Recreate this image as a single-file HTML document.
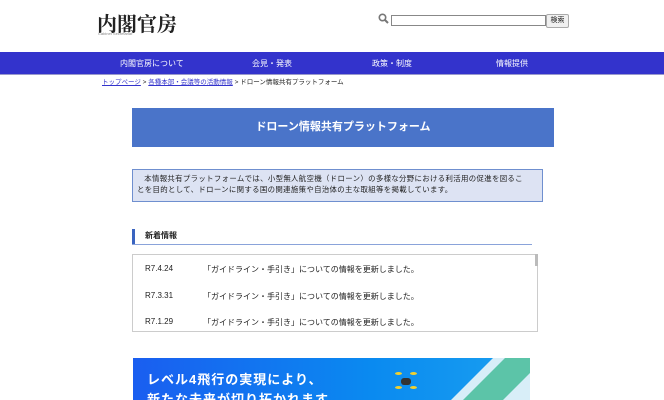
<!DOCTYPE html>
<html><head><meta charset="utf-8"><style>
body{margin:0;width:664px;height:400px;overflow:hidden;background:#fff;font-family:"Liberation Sans","Noto Sans CJK JP",sans-serif;color:#222;position:relative}
.a{position:absolute}
</style></head><body>
<div class="a" style="left:97px;top:8px;font-family:'Noto Serif CJK SC',serif;font-size:20px;font-weight:bold;letter-spacing:0px;color:#222">内閣官房</div>
<div class="a" style="left:98px;top:31px;font-size:4px;color:#888">Cabinet Secretariat</div>
<svg class="a" style="left:378px;top:13px" width="11" height="11"><circle cx="4.5" cy="4.5" r="3.2" fill="none" stroke="#777" stroke-width="1.6"/><line x1="7" y1="7" x2="10" y2="10" stroke="#777" stroke-width="2"/></svg>
<div class="a" style="left:391px;top:15px;width:153px;height:9px;border:1px solid #888"></div>
<div class="a" style="left:546px;top:14px;width:21px;height:12px;border:1px solid #aaa;background:#f0f0f0;font-size:7px;text-align:center;line-height:12px;border-radius:2px">検索</div>
<div class="a" style="left:0;top:52px;width:664px;height:22px;background:#3333cc;color:#fff;font-size:8px">
<span class="a" style="left:120px;top:6px">内閣官房について</span>
<span class="a" style="left:252px;top:6px">会見・発表</span>
<span class="a" style="left:372px;top:6px">政策・制度</span>
<span class="a" style="left:496px;top:6px">情報提供</span></div>
<div class="a" style="left:0;top:74px;width:664px;height:1px;background:#99c"></div>
<div class="a" style="left:102px;top:76px;font-size:6.5px;white-space:nowrap"><span style="color:#33c;text-decoration:underline">トップページ</span> &gt; <span style="color:#33c;text-decoration:underline">各種本部・会議等の活動情報</span> &gt; ドローン情報共有プラットフォーム</div>
<div class="a" style="left:132px;top:108px;width:422px;height:39px;background:#4a74c9;color:#fff;font-size:11px;font-weight:bold;text-align:center;line-height:39px">ドローン情報共有プラットフォーム</div>
<div class="a" style="left:132px;top:169px;width:411px;height:33px;padding:3px 4px 0;background:#dde3f3;border:1px solid #6f8fcf;font-size:7.4px;line-height:11px;box-sizing:border-box;white-space:nowrap;letter-spacing:0.35px">&nbsp;&nbsp;&nbsp;本情報共有プラットフォームでは、小型無人航空機（ドローン）の多様な分野における利活用の促進を図るこ<br>とを目的として、ドローンに関する国の関連施策や自治体の主な取組等を掲載しています。</div>
<div class="a" style="left:132px;top:229px;width:3px;height:15px;background:#3a64c0"></div>
<div class="a" style="left:145px;top:230px;font-size:8px;font-weight:bold">新着情報</div>
<div class="a" style="left:132px;top:244px;width:400px;height:1px;background:#8aa3da"></div>
<div class="a" style="left:132px;top:254px;width:404px;height:76px;border:1px solid #ccc"></div>
<div class="a" style="left:535px;top:254px;width:3px;height:12px;background:#bbb"></div>
<div class="a" style="left:145px;top:264px;font-size:8px">R7.4.24</div><div class="a" style="left:203px;top:264px;font-size:8px">「ガイドライン・手引き」についての情報を更新しました。</div>
<div class="a" style="left:145px;top:291px;font-size:8px">R7.3.31</div><div class="a" style="left:203px;top:291px;font-size:8px">「ガイドライン・手引き」についての情報を更新しました。</div>
<div class="a" style="left:145px;top:317px;font-size:8px">R7.1.29</div><div class="a" style="left:203px;top:317px;font-size:8px">「ガイドライン・手引き」についての情報を更新しました。</div>
<div class="a" style="left:133px;top:358px;width:397px;height:42px;background:linear-gradient(90deg,#1a5ef0,#0a8af0 60%,#1aa0f0);overflow:hidden">
<div class="a" style="left:14px;top:11px;color:#fff;font-size:13px;font-weight:bold;letter-spacing:1px;white-space:nowrap">レベル4飛行の実現により、</div>
<div class="a" style="left:14px;top:31px;color:#fff;font-size:13px;font-weight:bold;letter-spacing:1px;white-space:nowrap">新たな未来が切り拓かれます</div>
<div class="a" style="left:360px;top:0;width:140px;height:60px;background:#d8eef8;transform:skewX(-45deg);transform-origin:0 0"></div>
<div class="a" style="left:372px;top:0;width:40px;height:60px;background:#5cc4a8;transform:skewX(-45deg);transform-origin:0 0"></div>
<div class="a" style="left:268px;top:20px;width:10px;height:7px;background:#333;border-radius:3px"></div>
<div class="a" style="left:262px;top:14px;width:7px;height:3px;background:#f0d030;border-radius:50%"></div>
<div class="a" style="left:277px;top:14px;width:7px;height:3px;background:#f0d030;border-radius:50%"></div>
<div class="a" style="left:262px;top:28px;width:7px;height:3px;background:#f0d030;border-radius:50%"></div>
<div class="a" style="left:277px;top:28px;width:7px;height:3px;background:#f0d030;border-radius:50%"></div>
</div>
</body></html>
